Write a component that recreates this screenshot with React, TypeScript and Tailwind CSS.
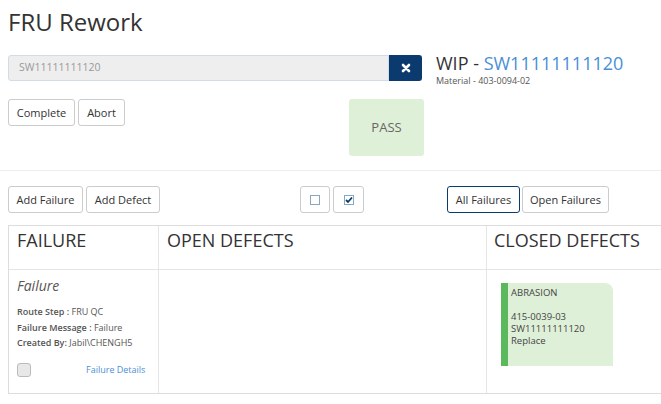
const font = { fontFamily: '"Open Sans", "Liberation Sans", sans-serif' };

const Btn = ({ children, active = false, className = "" }: { children: React.ReactNode; active?: boolean; className?: string }) => (
    <button
        className={`h-[27px] rounded-[3px] border bg-white text-[11px] leading-[14px] text-[#333] ${active ? "border-[#0b3b6e]" : "border-[#ccc]"} ${className}`}
    >
        {children}
    </button>
);

export default function App() {
    return (
        <div className="w-[661px] h-[404px] overflow-hidden bg-white text-[#333]" style={font}>
            <div className="pl-[8px]">
                <h1 className="text-[24px] leading-[28px] pt-[8px] text-[#333]">FRU Rework</h1>

                <div className="flex items-start mt-[19px] h-[26px]">
                    <div className="flex w-[414px] h-[26px]">
                        <div className="flex-1 flex items-center bg-[#eee] border border-[#cfdde8] rounded-l-[3px] pl-[10px] text-[10.5px] text-[#999]">
                            SW11111111120
                        </div>
                        <div className="w-[33px] flex items-center justify-center bg-[#0b3b6e] rounded-r-[3px]">
                            <svg width="10" height="10" viewBox="0 0 10 10">
                                <path d="M2 2 L8 8 M8 2 L2 8" stroke="white" strokeWidth="2.6" strokeLinecap="round" />
                            </svg>
                        </div>
                    </div>
                    <div className="ml-[14px] -mt-[4px]">
                        <div className="text-[18px] leading-[24px]">
                            WIP - <span className="text-[#4a8fd6]">SW11111111120</span>
                        </div>
                        <div className="text-[9px] leading-[11px] text-[#555]">Material - 403-0094-02</div>
                    </div>
                </div>

                <div className="flex items-start w-[416px] justify-between mt-[18px]">
                    <div className="flex gap-[3px]">
                        <Btn className="w-[67px]">Complete</Btn>
                        <Btn className="w-[47px]">Abort</Btn>
                    </div>
                    <div className="w-[75px] h-[57px] flex items-center justify-center bg-[#dff0d8] rounded-[3px] text-[13px] text-[#666]">
                        PASS
                    </div>
                </div>
            </div>

            <div className="border-t border-[#eee] mt-[14px]" />

            <div className="pl-[8px]">
                <div className="flex items-center mt-[15px] h-[27px]">
                    <div className="flex gap-[3px]">
                        <Btn className="w-[75px]">Add Failure</Btn>
                        <Btn className="w-[74px]">Add Defect</Btn>
                    </div>
                    <div className="flex gap-[3px] ml-[140px]">
                        <Btn className="w-[30px] flex items-center justify-center">
                            <span className="w-[10px] h-[10px] border border-[#8aa7c2] bg-white" />
                        </Btn>
                        <Btn className="w-[31px] flex items-center justify-center">
                            <span className="w-[10px] h-[10px] border border-[#8aa7c2] bg-white flex items-center justify-center">
                                <svg width="8" height="8" viewBox="0 0 8 8">
                                    <path d="M1 4 L3 6 L7 1.5" stroke="#0b3b6e" strokeWidth="1.8" fill="none" />
                                </svg>
                            </span>
                        </Btn>
                    </div>
                    <div className="flex gap-[2px] ml-[83px]">
                        <Btn active className="w-[73px]">All Failures</Btn>
                        <Btn className="w-[87px]">Open Failures</Btn>
                    </div>
                </div>

                <div className="mt-[12px] w-[720px] border border-[#ddd] grid grid-cols-[150px_328px_1fr]">
                    <div className="h-[44px] border-r border-b border-[#e5e5e5] pl-[8px] pt-[2px] text-[18px] leading-[24px]">FAILURE</div>
                    <div className="h-[44px] border-r border-b border-[#e5e5e5] pl-[8px] pt-[2px] text-[18px] leading-[24px]">OPEN DEFECTS</div>
                    <div className="h-[44px] border-b border-[#e5e5e5] pl-[7px] pt-[2px] text-[18px] leading-[24px]">CLOSED DEFECTS</div>

                    <div className="h-[123px] border-r border-[#e5e5e5] pl-[8px] pt-[7px]">
                        <div className="italic text-[14px] leading-[18px] text-[#555]">Failure</div>
                        <div className="mt-[9px] text-[9px] leading-[15.5px] text-[#555]">
                            <div><b className="font-semibold">Route Step :</b> FRU QC</div>
                            <div><b className="font-semibold">Failure Message :</b> Failure</div>
                            <div><b className="font-semibold">Created By:</b> Jabil\CHENGH5</div>
                        </div>
                        <div className="flex items-center mt-[12px]">
                            <span className="w-[14px] h-[14px] rounded-[3px] border border-[#bbb] bg-[#e8e8e8]" />
                            <span className="ml-[55px] text-[9px] text-[#4a8fd6]">Failure Details</span>
                        </div>
                    </div>
                    <div className="border-r border-[#e5e5e5]" />
                    <div className="pl-[14px] pt-[13px]">
                        <div className="flex w-[112px] h-[83px] bg-[#dff0d8] rounded-tr-[8px]">
                            <div className="w-[7px] bg-[#5cb85c]" />
                            <div className="pl-[3px] pt-[4px] text-[9.5px] leading-[12px] text-[#444]">
                                <div>ABRASION</div>
                                <div className="h-[12px]" />
                                <div>415-0039-03</div>
                                <div>SW11111111120</div>
                                <div>Replace</div>
                            </div>
                        </div>
                    </div>
                </div>
            </div>
        </div>
    );
}
